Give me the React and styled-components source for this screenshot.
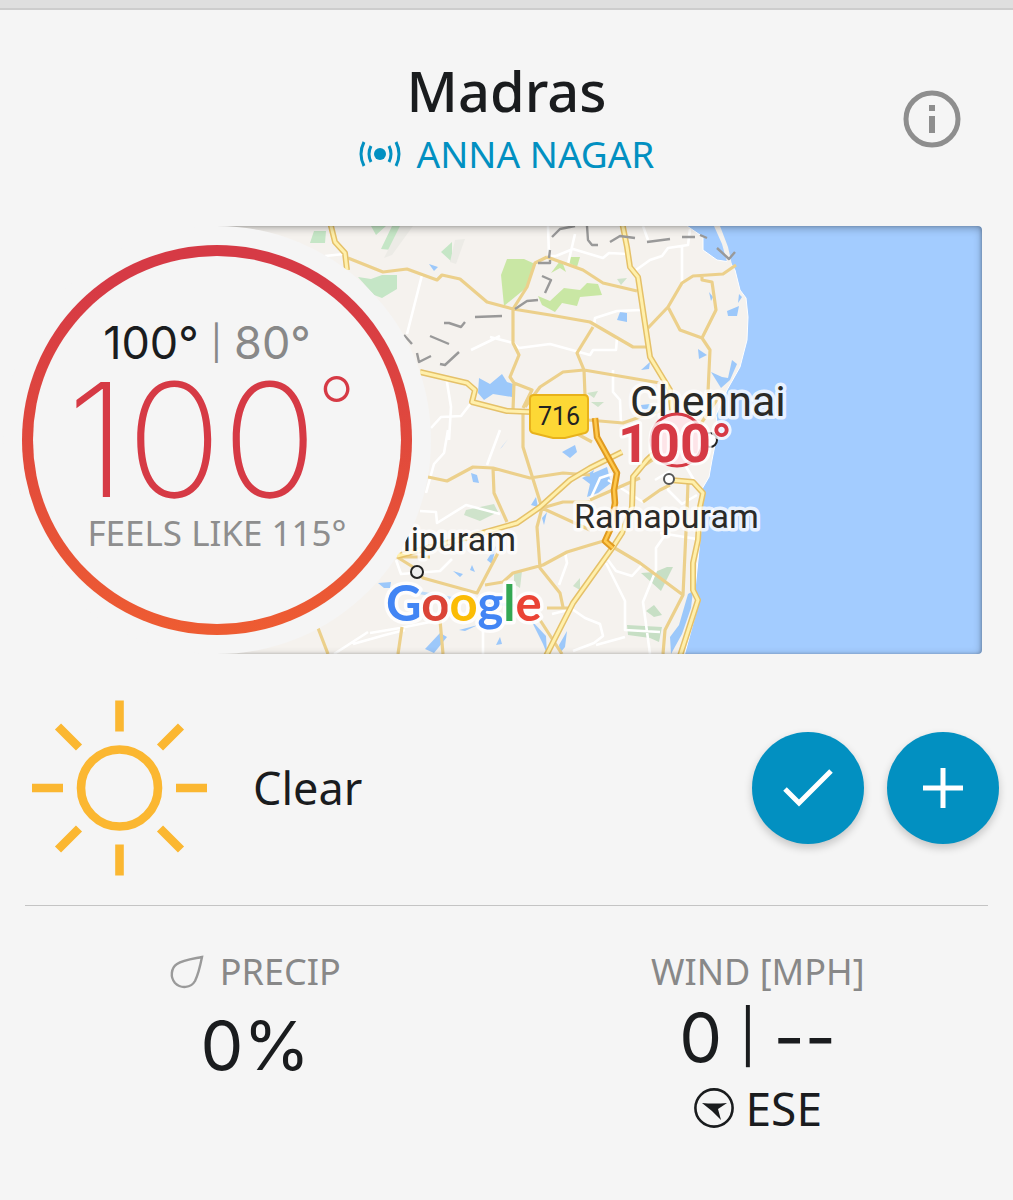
import styled, { createGlobalStyle } from 'styled-components'

const GlobalStyle = createGlobalStyle`
	* {
		box-sizing: border-box;
	}
	body {
		margin: 0;
		background: #f5f5f5;
		color: #1a1c1e;
		font-family: 'Noto Sans', 'Open Sans', sans-serif;
	}
`

const TopEdge = styled.div`
	height: 10px;
	background: #dfdfdf;
	border-bottom: 2px solid #cdcdcd;
`

const Header = styled.header`
	display: grid;
	grid-template-columns: 1fr auto 1fr;
	align-items: center;
	padding: 38px 48px 50px;
`
const Place = styled.div`
	grid-column: 2;
	text-align: center;
`
const City = styled.h1`
	margin: 0;
	font-size: 56px;
	line-height: 84px;
	font-weight: 500;
`
const Station = styled.a`
	display: flex;
	align-items: center;
	justify-content: center;
	gap: 16px;
	font-size: 37px;
	line-height: 44px;
	color: #0290c1;
	text-decoration: none;
`
const InfoButton = styled.button`
	justify-self: end;
	align-self: end;
	display: flex;
	padding: 0;
	border: 0;
	background: none;
	color: #8e8e8e;
	margin-bottom: 24px;
	cursor: pointer;
`

const Hero = styled.section`
	display: grid;
	grid-template-columns: 214px 214px 1fr;
	padding: 0 31px 0 3px;
`
const MapFrame = styled.div`
	grid-area: 1 / 2 / 2 / 4;
	display: grid;
	height: 428px;
	border-radius: 0 4px 4px 0;
	overflow: hidden;
`
const MapSvg = styled.svg`
	grid-area: 1 / 1;
	width: 100%;
	height: 428px;
	font-family: Roboto, sans-serif;
`
const MapShade = styled.div`
	grid-area: 1 / 1;
	z-index: 1;
	border-radius: 0 4px 4px 0;
	box-shadow: inset -1px 0 3px rgba(0, 0, 0, 0.2), inset 0 2px 8px rgba(0, 0, 0, 0.3);
`
const Dial = styled.div`
	grid-area: 1 / 1 / 2 / 3;
	z-index: 2;
	padding: 19px;
	border-radius: 50%;
	background: #f5f5f5;
`
const Ring = styled.div`
	height: 100%;
	display: flex;
	flex-direction: column;
	align-items: center;
	justify-content: center;
	padding-bottom: 8px;
	border: 11px solid transparent;
	border-radius: 50%;
	background: linear-gradient(#f5f5f5, #f5f5f5) padding-box,
		linear-gradient(#d63a45 10%, #ee5c32) border-box;
	font-family: Inter, sans-serif;
`
const HighLow = styled.div`
	display: flex;
	gap: 12px;
	padding-right: 20px;
	font-size: 45px;
	line-height: 64px;
	color: #888;
	white-space: nowrap;
`
const High = styled.span`
	color: #1a1c1e;
`
const Bar = styled.span`
	font-size: ${props => props.$size}px;
`
const Current = styled.div`
	display: flex;
	padding-right: 12px;
	font-size: 158px;
	line-height: 130px;
	font-weight: 200;
	color: #d63a45;
`
const Degree = styled.span`
	font-size: 84px;
	line-height: 66px;
`
const FeelsLike = styled.div`
	font-family: 'Noto Sans', sans-serif;
	font-size: 35px;
	line-height: 56px;
	color: #8e8e8e;
	white-space: nowrap;
`

const Condition = styled.section`
	display: flex;
	align-items: center;
	margin: 0 25px;
	padding: 46px 0 29px 7px;
	border-bottom: 1px solid #c4c4c4;
`
const Summary = styled.p`
	flex: 1;
	margin: 0 0 0 46px;
	font-size: 45px;
	line-height: 60px;
`
const Actions = styled.div`
	display: flex;
	gap: 23px;
	margin-right: -11px;
`
const RoundButton = styled.button`
	display: flex;
	align-items: center;
	justify-content: center;
	width: 112px;
	height: 112px;
	padding: 0;
	border: 0;
	border-radius: 50%;
	background: #0290c1;
	box-shadow: 0 4px 8px rgba(0, 0, 0, 0.2);
	cursor: pointer;
`

const Stats = styled.section`
	display: grid;
	grid-template-columns: 1fr 1fr;
	padding: 38px 4px;
`
const Stat = styled.div`
	display: flex;
	flex-direction: column;
	align-items: center;
`
const StatLabel = styled.div`
	display: flex;
	align-items: center;
	gap: 16px;
	font-size: 36px;
	line-height: 56px;
	color: #888;
`
const StatValue = styled.div`
	display: flex;
	gap: 17px;
	font-family: Inter, sans-serif;
	font-size: 68px;
	line-height: ${props => props.$height}px;
`
const Direction = styled.div`
	display: flex;
	align-items: center;
	gap: 12px;
	font-size: 46px;
	line-height: 68px;
`

// map geometry, drawn back to front
const land =
	'M200 200H680L687 226 703 237V250L717 260 730 262 735 270 740 290 746 298 748 317 747 340 740 367 727 390 716 415 718 430 712 460 709 477 702 489 701 530 695 590 699 602 694 620 683 660H200Z'

const parks = [
	['#c9e7a4', 'M507 259H524L535 264 526 288 504 306 501 275Z'],
	['#c9e7a4', 'M538 296 550 301 564 288 580 290 587 283 598 284 602 295 580 297 577 306 562 303 555 312 542 305Z'],
	['#c9e7a4', 'M551 273 560 261 563 264 566 272 560 268ZM570 257H580L577 267 569 263Z'],
	['#c5e6c6', 'M358 277 371 279 382 275H397V289L382 298 374 295Z'],
	['#c5e6c6', 'M314 231 326 231 325 243 310 243Z'],
	['#c5e6c6', 'M392 226H407L392 250 381 249ZM441 252 452 242V262ZM371 226H386L376 235Z'],
	['#cfe3cb', 'M466 510 494 504 498 512 480 521 464 515ZM617 279 627 278 621 285Z'],
	['#cfe3cb', 'M514 573 522 571 520 588 514 584ZM573 586 580 578V590ZM587 393 598 391 594 398ZM591 402 604 402 598 407Z'],
	['#c7dfc5', 'M641 573 655 572 667 567 673 567 661 591ZM646 611 654 605 662 615 654 617ZM627 625 662 627 659 642 650 638 628 635Z'],
	['#ecebe6', 'M400 226H413L392 255 384 258ZM455 240 465 239 456 264 450 262Z'],
]

const waters = [
	'M479 378 490 384 502 374 507 382 513 384 512 397 493 394 484 400 478 393Z',
	'M429 264 438 267 434 271ZM620 312 627 313V322L617 320Z',
	'M727 311 739 306 737 316 728 316ZM709 292 713 297 711 301ZM739 294 742 297 738 303Z',
	'M698 349 707 355 699 359ZM711 372 722 377 728 378 732 360 737 364 730 380 721 388Z',
	'M641 370 650 362 649 369ZM641 405 650 404 653 412 642 409Z',
	'M562 452 575 445 577 452 570 458ZM471 473 477 475 479 483 473 482ZM502 447 508 439 500 449Z',
	'M582 478 607 467 611 483 598 493 587 497 590 484ZM586 475 594 470 590 483Z',
	'M531 505 536 497 538 507ZM542 518 547 512 544 525ZM487 560 496 546 492 564ZM453 571 463 574 460 577Z',
	'M472 565 475 572 470 570ZM378 583 391 582 390 588 384 588ZM425 649 440 633 447 637 434 653ZM459 630 478 625 465 631Z',
	'M496 645 500 637 502 644ZM559 645 567 631 565 647 560 653ZM531 620 546 636 547 654 543 644Z',
	'M688 594 693 591 691 608 682 634 671 654 670 637 679 625Z',
]

const lanes = [
	'M325 256 344 254M422 275 407 334M446 376 451 407 449 440M431 428 441 417 461 416 475 398',
	'M471 350 500 336M548 226 549 256 556 256M575 234 568 264M556 256 573 249 603 258 609 253 628 254',
	'M636 270 650 260 662 256 668 248 688 245 690 229M682 245 682 282M648 240 643 226',
	'M641 310 617 311 595 318 594 326M490 337 513 343 519 348 550 344 590 355 593 350 616 350 617 338',
	'M613 370 613 392 620 400 621 424M500 430 487 465M448 430 444 453 434 464 426 493',
	'M420 511 436 512 437 523 466 505 500 514M396 560 401 574 440 571 452 559M370 633 400 628 440 620',
	'M565 552 567 563 559 585M483 622 483 654M552 614 572 609 585 618 600 624 603 636 594 643 573 651',
	'M606 563 612 575 625 601 625 630 660 632M608 560 616 571 632 576 642 565M650 654 643 602 656 570 656 548 665 535',
	'M608 480 643 502M655 480 670 471M668 480 668 490 682 504 697 495M660 533 697 539M625 637 596 645M353 644 385 635 405 630',
	'M334 654 368 632M612 474 600 478 590 500M690 430 682 460 694 480',
]

const minorRoads = [
	'M348 258 383 272 407 269 437 280 442 275 460 279 487 302 513 309 550 315 590 322 633 347 647 347',
	'M547 257 583 270 603 283 637 291M513 309 527 287 535 263 547 257',
	'M513 309 513 343 519 355 510 377 514 383 513 410M514 383 532 390 523 408',
	'M593 327 577 353 584 370 585 395M525 407 540 387 563 372 584 370 660 383',
	'M648 328 668 307 682 283 693 276 723 274 736 265M668 307 680 330 702 338 716 310 712 282 702 280V275',
	'M702 338 710 350 708 392M588 420 623 423 640 417 663 410',
	'M428 477 447 481 473 467 493 468 530 478 563 473 590 475M493 468 494 493 507 522',
	'M523 412 523 447 542 508 537 527 540 568 560 593 563 607M547 608 570 608',
	'M542 508 563 502 590 502M542 508 590 530M397 557 413 567 423 578 477 593 498 553M397 557H430',
	'M485 585 503 582 513 573 543 565 567 552 590 545 607 540M613 547 640 563 683 595',
	'M590 500 640 478M643 502 660 490 670 485M402 627 398 654M440 620 443 654M540 620 562 654M318 628 328 654',
	'M570 430 592 442M688 482 687 510 683 595 665 630 663 654M645 465 660 455M720 395 690 440',
]

const majorRoads = [
	'M330 222 335 242 345 253 347 270',
	'M420 372 467 383 475 390 472 402 507 411 532 412',
	'M622 222 627 247 630 267 638 277 650 357 670 390 672 410',
	'M397 556 447 543 517 523 540 507 570 480 590 468 622 452',
	'M545 658 573 603 613 547 622 533 632 507 633 477 647 460 668 440',
	'M670 480 693 482 703 493 700 507 698 540 693 563 693 590 698 600 680 656',
]

const borders =
	'M552 237 560 229 575 226M587 226 588 240 592 245 598 245M610 242 620 236 635 238M647 242 670 239M682 237H695M700 235 707 238M717 248 729 259 735 252M550 250 549 258M538 263H550V260M542 276 551 280 545 293M515 309 527 301 538 300M475 317 502 316M444 323 449 323 461 327 465 322M430 336 449 344M417 353 419 362 431 356M440 364 445 365 459 352M404 335 412 344'

const googleLetters = [
	['G', '#4285f4'],
	['o', '#db4437'],
	['o', '#fbbc05'],
	['g', '#4285f4'],
	['l', '#34a853'],
	['e', '#ea4335'],
]

const Coast = () => (
	<MapSvg viewBox="217 226 765 428" preserveAspectRatio="xMinYMid slice" role="img" aria-label="Map of Chennai">
		<rect x="200" y="200" width="1800" height="480" fill="#a3ccff" />
		<path d={land} fill="#f5f2ee" stroke="#fff" strokeWidth="1" />
		<path d="M714 226H720L728 247 732 265 727 262 722 244Z" fill="#f5f2ee" />
		{parks.map(([fill, d]) => (
			<path key={d} d={d} fill={fill} />
		))}
		<path d={waters.join('')} fill="#9cc8fa" />
		<path d="M416 592 450 598 490 603 520 606" fill="none" stroke="#bddaf7" strokeWidth="3" />
		<g fill="none" strokeLinejoin="round">
			<path d={lanes.join('')} stroke="#fff" strokeWidth="2.6" />
			<path d={minorRoads.join('')} stroke="#ecd08b" strokeWidth="3.2" />
			<path d={majorRoads.join('')} stroke="#e5c169" strokeWidth="6" />
			<path d={majorRoads.join('')} stroke="#fff0ac" strokeWidth="3" />
			<path
				d="M595 418 597 437 617 473 614 490 615 503 610 530 605 541 613 548"
				stroke="#e09a20"
				strokeWidth="6.5"
			/>
			<path
				d="M595 418 597 437 617 473 614 490 615 503 610 530 605 541 613 548"
				stroke="#ffc94d"
				strokeWidth="2.5"
			/>
			<path d={borders} stroke="#999" strokeWidth="2.4" />
		</g>
		<path
			d="M534 395H584Q588 395 588 399V429Q588 432 585 433L565 438H553L533 433Q530 432 530 429V399Q530 395 534 395Z"
			fill="#fdd835"
			stroke="#e8b21c"
			strokeWidth="2"
		/>
		<text x="559" y="425" fontSize="25" textAnchor="middle" fill="#222">
			716
		</text>
		<circle cx="710" cy="440" r="7" fill="#fff" stroke="#222" strokeWidth="2" />
		<g fill="#2b2b28" stroke="#fff" strokeOpacity="0.75" strokeWidth="7" strokeLinejoin="round" paintOrder="stroke">
			<text x="630" y="416" fontSize="43">
				Chennai
			</text>
			<text x="574" y="528" fontSize="34">
				Ramapuram
			</text>
			<text x="516" y="551" fontSize="34" textAnchor="end">
				Kanchipuram
			</text>
		</g>
		<circle cx="677" cy="440" r="26" fill="#fde4e8" stroke="#d63a45" strokeWidth="3" />
		<text
			x="618"
			y="462"
			fontSize="54"
			fontWeight="700"
			fill="#d63a45"
			stroke="#fff"
			strokeOpacity="0.8"
			strokeWidth="6"
			strokeLinejoin="round"
			paintOrder="stroke"
		>
			100°
		</text>
		<circle cx="669" cy="479" r="5" fill="#fff" stroke="#555" strokeWidth="2" />
		<circle cx="417" cy="572" r="6" fill="#eee" stroke="#222" strokeWidth="2" />
		<text
			x="386"
			y="621"
			fontFamily="Lato, sans-serif"
			fontSize="49"
			fontWeight="700"
			stroke="#fff"
			strokeOpacity="0.85"
			strokeWidth="7"
			strokeLinejoin="round"
			paintOrder="stroke"
		>
			{googleLetters.map(([letter, fill], i) => (
				<tspan key={i} fill={fill}>
					{letter}
				</tspan>
			))}
		</text>
	</MapSvg>
)

const BeaconIcon = () => (
	<svg width="42" height="28" viewBox="0 0 42 28" fill="none" stroke="#0290c1" strokeWidth="3" aria-hidden="true">
		<circle cx="21" cy="14" r="6" fill="#0290c1" stroke="none" />
		<path d="M12 6Q8 14 12 22M30 6Q34 14 30 22M5 2Q-1 14 5 26M37 2Q43 14 37 26" />
	</svg>
)

const InfoIcon = () => (
	<svg width="66" height="66" viewBox="0 0 66 66" aria-hidden="true">
		<circle cx="33" cy="33" r="26" fill="none" stroke="currentColor" strokeWidth="5" />
		<path d="M30 19h6v6h-6zM30 30h6v17h-6z" fill="currentColor" />
	</svg>
)

const SunIcon = () => (
	<svg width="175" height="176" viewBox="0 0 175 176" fill="none" stroke="#fbb731" strokeWidth="8.6" aria-hidden="true">
		<circle cx="87.5" cy="88" r="38.5" />
		<path d="M87.5 .5v31M87.5 144.5v31M0 88h31M144 88h31M26 26.5 47 47.5M149 26.5 128 47.5M26 149.5 47 128.5M149 149.5 128 128.5" />
	</svg>
)

const DropIcon = () => (
	<svg width="34" height="34" viewBox="0 0 34 34" fill="none" stroke="#9a9a9a" strokeWidth="2.4" aria-hidden="true">
		<path d="M32 2C30 12 28 20 25 26C21 33 11 34 5 28C0 22 1 13 7 9C13 5 22 4 32 2Z" />
	</svg>
)

const WindIcon = () => (
	<svg width="40" height="40" viewBox="0 0 40 40" aria-hidden="true">
		<circle cx="20" cy="20" r="18.6" fill="none" stroke="#1a1c1e" strokeWidth="2.6" />
		<path d="M8 15Q20 16 33 15L24 21 27 32Q19 23 8 15Z" fill="#1a1c1e" />
	</svg>
)

const App = () => {
	return (
		<>
			<GlobalStyle />
			<TopEdge />
			<Header>
				<Place>
					<City>Madras</City>
					<Station href="#station">
						<BeaconIcon />
						ANNA NAGAR
					</Station>
				</Place>
				<InfoButton aria-label="Station info">
					<InfoIcon />
				</InfoButton>
			</Header>
			<main>
				<Hero>
					<MapFrame>
						<Coast />
						<MapShade />
					</MapFrame>
					<Dial>
						<Ring>
							<HighLow>
								<High>100°</High>
								<Bar $size={34}>|</Bar>
								<span>80°</span>
							</HighLow>
							<Current>
								100<Degree>°</Degree>
							</Current>
							<FeelsLike>FEELS LIKE 115°</FeelsLike>
						</Ring>
					</Dial>
				</Hero>
				<Condition>
					<SunIcon />
					<Summary>Clear</Summary>
					<Actions>
						<RoundButton aria-label="Confirm conditions">
							<svg width="50" height="40" viewBox="0 0 50 40" fill="none" stroke="#fff" strokeWidth="5">
								<path d="M2 21 16 35 48 3" />
							</svg>
						</RoundButton>
						<RoundButton aria-label="Add report">
							<svg width="40" height="40" viewBox="0 0 40 40" fill="none" stroke="#fff" strokeWidth="5">
								<path d="M20 0v40M0 20h40" />
							</svg>
						</RoundButton>
					</Actions>
				</Condition>
				<Stats>
					<Stat>
						<StatLabel>
							<DropIcon />
							PRECIP
						</StatLabel>
						<StatValue $height={90}>0%</StatValue>
					</Stat>
					<Stat>
						<StatLabel>WIND [MPH]</StatLabel>
						<StatValue $height={74}>
							<span>0</span>
							<Bar $size={52}>|</Bar>
							<span>--</span>
						</StatValue>
						<Direction>
							<WindIcon />
							ESE
						</Direction>
					</Stat>
				</Stats>
			</main>
		</>
	)
}

export default App
